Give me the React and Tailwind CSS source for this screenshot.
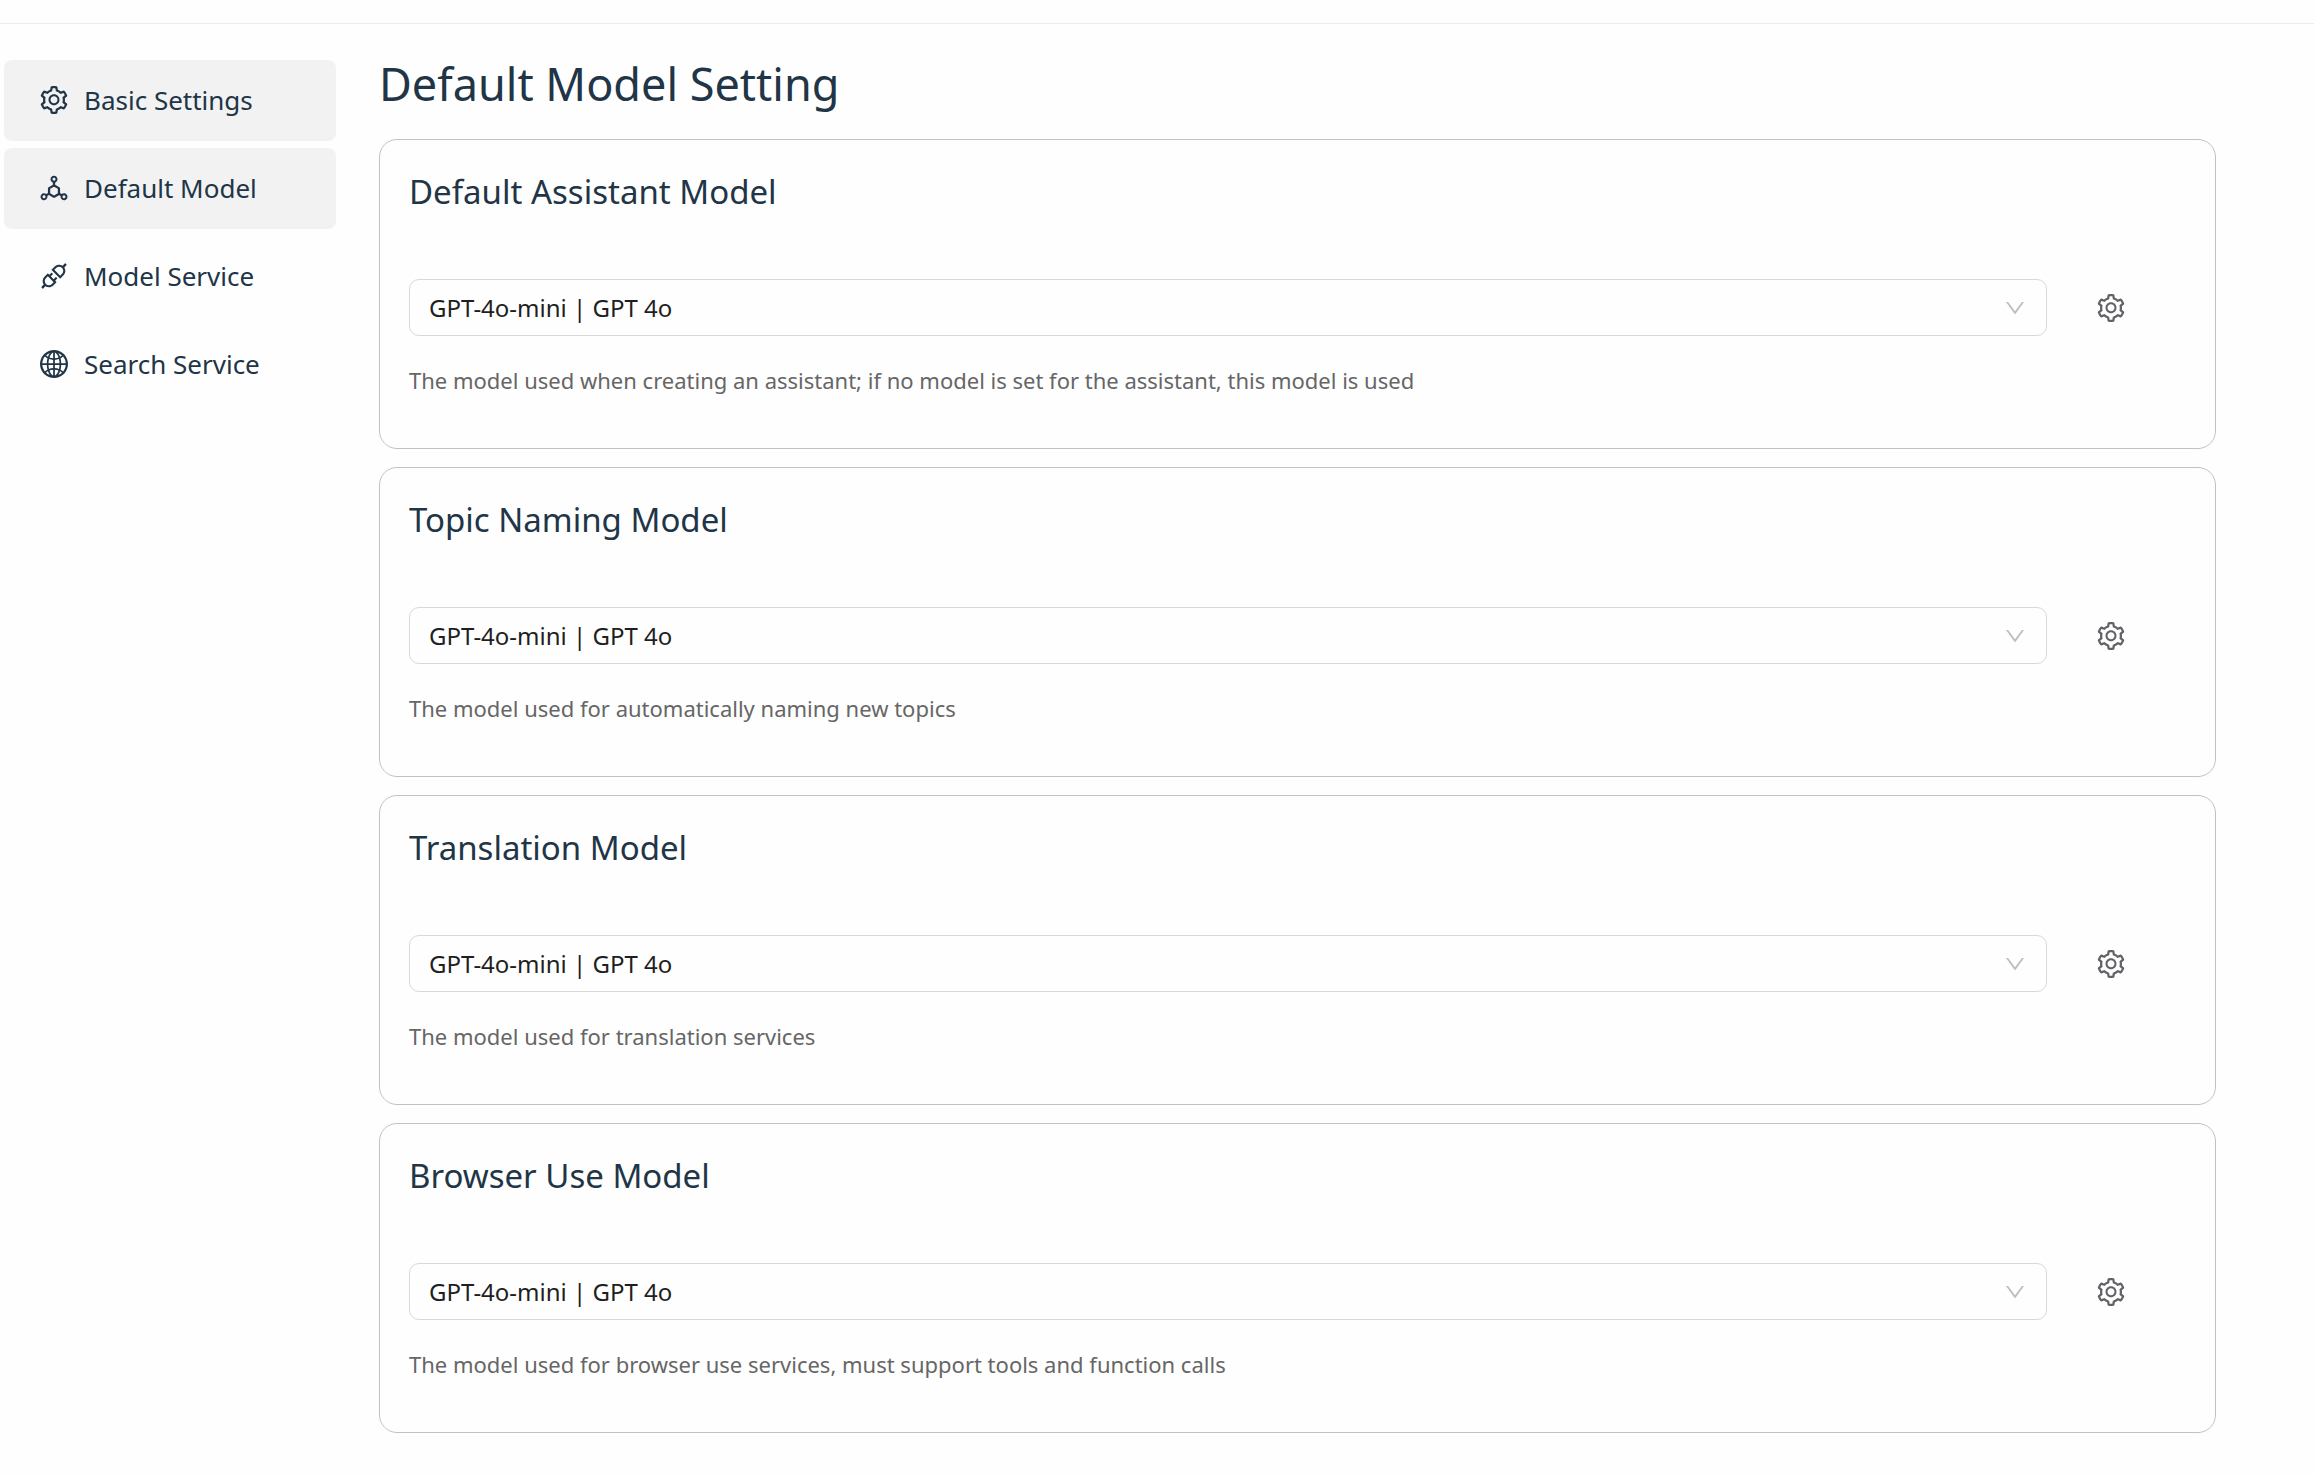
import React from "react";
import {
  AiOutlineSetting,
  AiOutlineDeploymentUnit,
  AiOutlineApi,
  AiOutlineGlobal,
  AiOutlineDown,
} from "react-icons/ai";

const NAV = [
  { label: "Basic Settings", Icon: AiOutlineSetting, active: true },
  { label: "Default Model", Icon: AiOutlineDeploymentUnit, active: true },
  { label: "Model Service", Icon: AiOutlineApi, active: false },
  { label: "Search Service", Icon: AiOutlineGlobal, active: false },
];

const MODELS = [
  {
    id: "assistant",
    title: "Default Assistant Model",
    note: "The model used when creating an assistant; if no model is set for the assistant, this model is used",
  },
  {
    id: "topic",
    title: "Topic Naming Model",
    note: "The model used for automatically naming new topics",
  },
  {
    id: "translation",
    title: "Translation Model",
    note: "The model used for translation services",
  },
  {
    id: "browser",
    title: "Browser Use Model",
    note: "The model used for browser use services, must support tools and function calls",
  },
];

function NavItem({ label, Icon, active }) {
  return (
    <li>
      <a
        href="#"
        className={
          "flex h-[81px] items-center gap-3.5 rounded-lg pb-0.5 pl-[34px] text-[26px] leading-9 text-[#213547] " +
          (active ? "bg-[#f2f2f2]" : "")
        }
      >
        <Icon className="size-8 shrink-0" aria-hidden="true" />
        <span>{label}</span>
      </a>
    </li>
  );
}

function ModelCard({ id, title, note }) {
  return (
    <section className="rounded-[18px] border border-[#c2c2c2] px-[29px] pt-[30px] pb-[50px]">
      <h2 className="text-[33px] leading-11 text-[#213547]">
        <label htmlFor={id}>{title}</label>
      </h2>
      <div className="mt-[65px] flex items-center pr-[59px]">
        <div className="relative grow">
          <select
            id={id}
            className="block h-[57px] w-full appearance-none rounded-[10px] border border-[#d9d9d9] bg-[#fefefe] px-[19px] text-[24px] text-[#1f1f1f]"
          >
            <option>GPT-4o-mini | GPT 4o</option>
          </select>
          <AiOutlineDown
            className="pointer-events-none absolute top-1/2 right-5 size-6 -translate-y-1/2 text-[#bfbfbf]"
            aria-hidden="true"
          />
        </div>
        <button type="button" aria-label={"Configure " + title} className="ml-12 text-[#606266]">
          <AiOutlineSetting className="size-8" />
        </button>
      </div>
      <p className="mt-[26px] text-[22px] leading-9 text-[#666666]">{note}</p>
    </section>
  );
}

export default function App() {
  return (
    <div className="min-h-screen bg-[#fefefe] font-['Noto_Sans','Open_Sans',sans-serif]">
      <header className="h-6 border-b border-[#ebebeb]" />
      <div className="flex">
        <nav className="ml-1 w-[332px] shrink-0 pt-9" aria-label="Settings">
          <ul className="flex flex-col gap-[7px]">
            {NAV.map((item) => (
              <NavItem key={item.label} {...item} />
            ))}
          </ul>
        </nav>
        <main className="mr-[98px] ml-[43px] min-w-0 grow pt-[30px]">
          <h1 className="text-[45px] leading-[60px] text-[#213547]">Default Model Setting</h1>
          <div className="mt-[25px] flex flex-col gap-[18px]">
            {MODELS.map((model) => (
              <ModelCard key={model.id} {...model} />
            ))}
          </div>
        </main>
      </div>
    </div>
  );
}
